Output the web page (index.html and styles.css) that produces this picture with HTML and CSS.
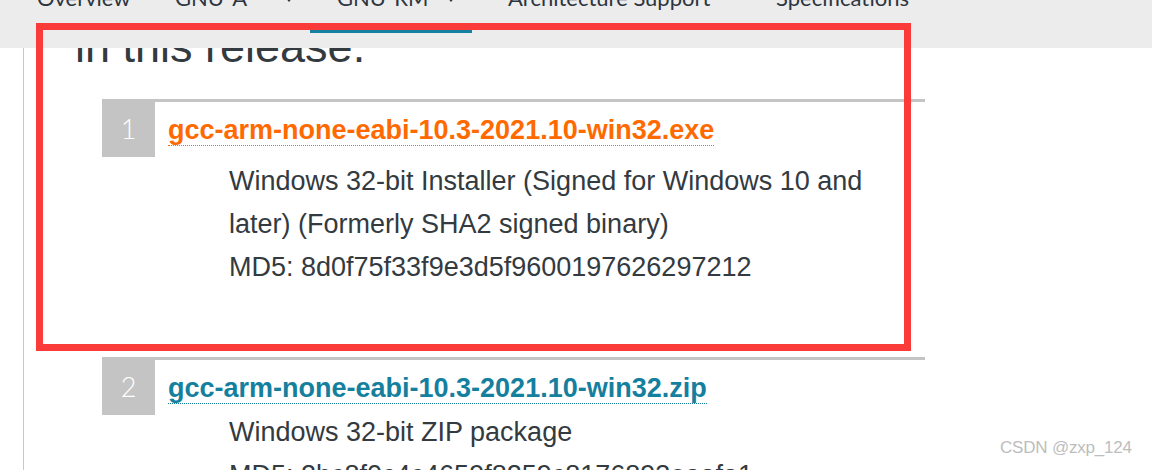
FILE: index.html
```html
<!DOCTYPE html>
<html lang="en">
<head>
<meta charset="utf-8">
<title>GNU-RM Downloads</title>
<link rel="stylesheet" href="styles.css">
</head>
<body>
<nav class="nav">
  <div class="nav-item"><span class="nav-text">Overview</span></div>
  <div class="nav-item"><span class="nav-text nav-text--dd">GNU-A</span><span class="caret"></span></div>
  <div class="nav-item nav-item--active"><span class="nav-text nav-text--dd">GNU-RM</span><span class="caret"></span></div>
  <div class="nav-item"><span class="nav-text">Architecture Support</span></div>
  <div class="nav-item"><span class="nav-text">Specifications</span></div>
</nav>

<main class="page">
  <div class="content">
    <h2 class="heading">In this release.</h2>
    <ol class="files">
      <li class="file">
        <div class="num">1</div>
        <div class="file-body">
          <div class="file-link-row"><a class="file-link file-link--hover" href="#">gcc-arm-none-eabi-10.3-2021.10-win32.exe</a></div>
          <p class="desc desc--gap">Windows 32-bit Installer (Signed for Windows 10 and later) (Formerly SHA2 signed binary)<br>MD5: 8d0f75f33f9e3d5f9600197626297212</p>
        </div>
      </li>
      <li class="file">
        <div class="num">2</div>
        <div class="file-body">
          <div class="file-link-row"><a class="file-link" href="#">gcc-arm-none-eabi-10.3-2021.10-win32.zip</a></div>
          <p class="desc desc--tight">Windows 32-bit ZIP package<br>MD5: 2bc8f0c4c4659f8259c8176893eaafa1</p>
        </div>
      </li>
    </ol>
  </div>
</main>

<div class="annotation"></div>
<div class="watermark">CSDN @zxp_124</div>
</body>
</html>
```

FILE: styles.css
```css
html, body {
  margin: 0;
  padding: 0;
  background: #ffffff;
  overflow: hidden;
}

body {
  font-family: "Liberation Sans", Arial, sans-serif;
  color: #333333;
  width: 1152px;
  height: 470px;
  position: relative;
}

/* top navigation (sticky header overlaying scrolled content) */
.nav {
  position: absolute;
  top: 0;
  left: 0;
  right: 0;
  height: 48px;
  background: #ececec;
  z-index: 5;
  display: grid;
  grid-template-columns: 138px 162px 171px 268px auto;
  padding-left: 10px;
  box-sizing: border-box;
  align-items: start;
}

.nav-item {
  padding-left: 27px;
  margin-top: -13px;
  font-family: Lato, "Open Sans", sans-serif;
  font-size: 22px;
  line-height: 22px;
  color: #2d3640;
  white-space: nowrap;
}

.nav-text {
  display: inline-block;
}

.nav-text--dd {
  min-width: 96px;
}

.nav-item--active::after {
  content: "";
  display: block;
  width: 162px;
  height: 3px;
  margin-left: -27px;
  margin-top: 21px;
  background: #1481a0;
}

.caret {
  display: inline-block;
  width: 0;
  height: 0;
  border-left: 4px solid transparent;
  border-right: 4px solid transparent;
  border-top: 5px solid #2d3640;
  margin-left: 14px;
  vertical-align: 4px;
}

/* page content */
.page {
  padding-left: 23px;
}

.content {
  border-left: 1px solid #c9c9c9;
  padding-left: 51px;
  padding-top: 20px;
  min-height: 470px;
  box-sizing: border-box;
}

.heading {
  margin: 0;
  font-size: 45px;
  line-height: 54px;
  font-weight: normal;
  color: #333a40;
  text-transform: lowercase;
}

.files {
  list-style: none;
  margin: 25px 0 0 27px;
  padding: 0;
  width: 823px;
}

.file {
  display: flex;
  border-top: 3px solid #c3c4c3;
  padding-bottom: 67px;
}

.num {
  flex: 0 0 53px;
  height: 55px;
  background: #c3c4c3;
  color: #ffffff;
  font-family: Lato, "Open Sans", sans-serif;
  font-weight: 300;
  font-size: 27px;
  line-height: 54px;
  text-align: center;
}

.file-body {
  flex: 1;
  padding-left: 13px;
}

.file-link-row {
  padding-top: 7px;
  font-size: 27px;
  line-height: 43px;
}

.file-link {
  font-weight: bold;
  color: #15809e;
  text-decoration: none;
  border-bottom: 1px dotted currentColor;
}

.file-link--hover {
  color: #ff6a00;
}

.desc {
  margin: 0 0 0 61px;
  font-size: 27px;
  line-height: 43.2px;
  color: #333a40;
}

.desc--gap {
  margin-top: 8px;
}

.desc--tight {
  margin-top: 1px;
}

/* screenshot annotation overlay */
.annotation {
  position: absolute;
  left: 36px;
  top: 23px;
  width: 875px;
  height: 328px;
  border: 7px solid #fb3a3a;
  box-sizing: border-box;
  z-index: 10;
}

.watermark {
  position: absolute;
  left: 1000px;
  top: 438px;
  font-family: "Liberation Sans", Arial, sans-serif;
  font-size: 17px;
  letter-spacing: -0.2px;
  color: #bdbdbd;
  text-shadow: 0 0 1px rgba(255, 255, 255, 0.8);
  z-index: 10;
}
```
